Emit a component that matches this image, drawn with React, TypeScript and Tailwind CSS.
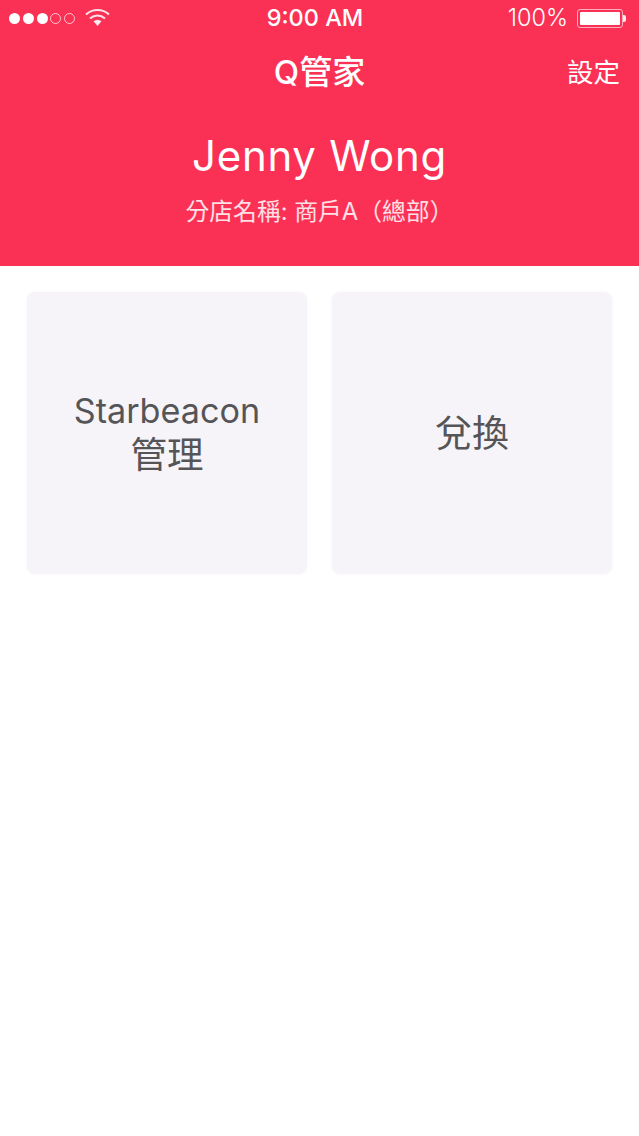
import React from "react";

const font = "font-['Inter','Noto_Sans_CJK_TC',sans-serif]";

function StatusBar() {
  return (
    <div className="grid h-9 grid-cols-[1fr_auto_1fr] items-center pl-[9px] pr-[13px] text-white">
      <div className="flex items-center">
        <div className="flex items-center gap-[2.75px]">
          <span className="h-[11px] w-[11px] rounded-full bg-white" />
          <span className="h-[11px] w-[11px] rounded-full bg-white" />
          <span className="h-[11px] w-[11px] rounded-full bg-white" />
          <span className="h-[11px] w-[11px] rounded-full border border-white/70" />
          <span className="h-[11px] w-[11px] rounded-full border border-white/70" />
        </div>
        <svg className="mb-[2px] ml-[10px]" width="25" height="19" viewBox="0 0 25 19" fill="none">
          <path d="M1 6.5C7.5 0.5 17.5 0.5 24 6.5" stroke="white" strokeWidth="2.2" opacity="0.85" />
          <path d="M5 10.5C9.5 6.5 15.5 6.5 20 10.5" stroke="white" strokeWidth="2.2" opacity="0.85" />
          <path d="M8.5 13.2C11 11.2 14 11.2 16.5 13.2L12.5 18Z" fill="white" opacity="0.9" />
        </svg>
      </div>
      <span className="mr-[5px] text-[23.5px] leading-none font-medium">9:00 AM</span>
      <div className="flex items-center justify-end gap-[9px]">
        <span className="text-[23.5px] leading-none font-light">100%</span>
        <div className="flex items-center">
          <div className="h-[19px] w-[46px] rounded-[3px] border border-white/60 p-[2px]">
            <div className="h-full w-full rounded-[1px] bg-white" />
          </div>
          <span className="h-[7px] w-[3px] rounded-r-[2px] bg-white/90" />
        </div>
      </div>
    </div>
  );
}

function Card({ children }: { children: React.ReactNode }) {
  return (
    <div className="flex h-[282px] w-[280px] flex-col items-center justify-center rounded-[8px] bg-[#f6f4f8] text-[#555558] shadow-[0_0_4px_rgba(0,0,0,0.03)]">
      {children}
    </div>
  );
}

export default function App() {
  return (
    <div className={`min-h-[1136px] bg-white ${font}`}>
      <header className="h-[266px] bg-[#fb3055] text-white">
        <StatusBar />
        <div className="grid h-[72px] grid-cols-[1fr_auto_1fr] items-center px-[19px]">
          <span />
          <h1 className="text-[33px] leading-none font-medium">Q管家</h1>
          <span className="justify-self-end text-[26.5px] leading-none">設定</span>
        </div>
        <div className="flex flex-col items-center pt-[23px]">
          <div className="text-[42px] leading-[50px] tracking-[0.7px]">Jenny Wong</div>
          <div className="mt-[16px] text-[23.8px] leading-[30px] text-white/85">分店名稱: 商戶A（總部）</div>
        </div>
      </header>
      <main className="flex justify-between pt-[26px] pl-[27px] pr-[27px]">
        <Card>
          <span className="text-[34.2px] leading-[45px]">Starbeacon</span>
          <span className="text-[36.5px] leading-[45px]">管理</span>
        </Card>
        <Card>
          <span className="text-[37px] leading-[45px]">兌換</span>
        </Card>
      </main>
    </div>
  );
}
